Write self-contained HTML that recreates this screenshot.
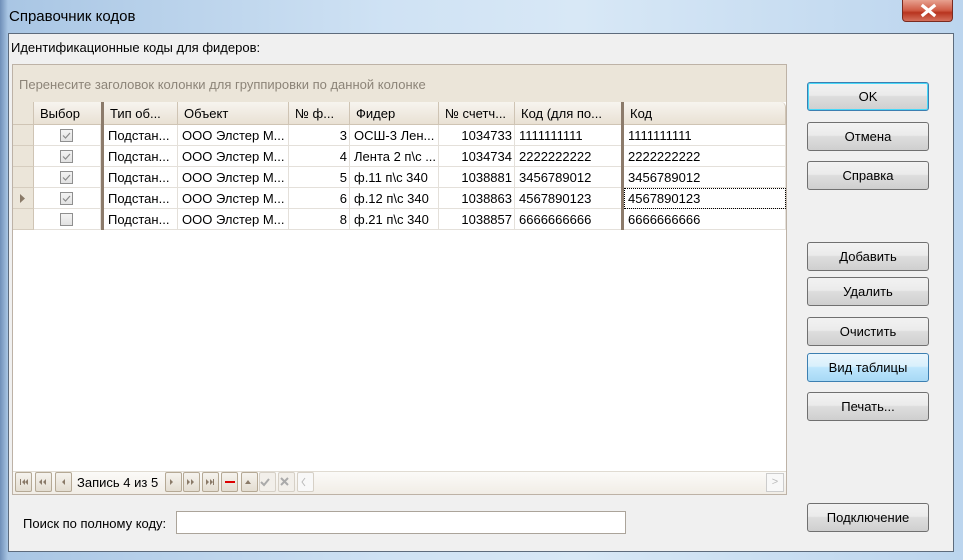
<!DOCTYPE html>
<html><head><meta charset="utf-8"><style>
*{box-sizing:border-box;margin:0;padding:0}
body{width:963px;height:560px;overflow:hidden;position:relative;font-family:"Liberation Sans","DejaVu Sans",sans-serif;font-size:13px;color:#000;background:linear-gradient(90deg,#6f8fb8 0,#a9c6e4 8px,#cfe2f4 40%,#d8e8f6 60%,#bcd5ee 100%)}
.a{position:absolute}
.title{left:9px;top:8px;font-size:15px;color:#000}
.client{left:8px;top:33px;width:946px;height:519px;background:#f0f0f0;border:1px solid #5d6b7c}
.btn{position:absolute;left:807px;width:122px;height:29px;border:1px solid #707070;border-radius:3px;background:linear-gradient(#f2f2f2 0,#ebebeb 45%,#dddddd 50%,#cfcfcf 100%);text-align:center;line-height:27px;font-size:13px}
.btn.blue{border-color:#3c7fb1;background:linear-gradient(#eaf6fd 0,#d9f0fc 45%,#bee6fd 50%,#a7d9f5 100%)}
.btn.ok{border-color:#3c7fb1;box-shadow:inset 0 0 0 1px #48d8f8}
.grid{left:12px;top:64px;width:775px;height:431px;border:1px solid #bdb2a6;background:#fff}
.grp{left:0;top:0;width:773px;height:37px;background:#ebe5d9;color:#8c8478;font-size:13px;padding:12px 0 0 6px}
.hdr{top:37px;height:23px;background:linear-gradient(#f7f4ef,#e9e1d4);border-bottom:1px solid #cfc4b4;border-right:1px solid #cfc4b4;padding:4px 0 0 6px;font-size:13px}
.cell{height:21px;border-right:1px solid #e4e0da;border-bottom:1px solid #e4e0da;padding:3px 0 0 4px;white-space:nowrap;overflow:hidden;font-size:13px}
.ind{background:#ebe5d9;border-right:1px solid #cfc4b4;border-bottom:1px solid #d6cdbf}
.chk{position:absolute;left:26px;top:4px;width:13px;height:13px;border:1px solid #8f8f8f;background:linear-gradient(#f3f3f3,#e2e2e2)}
.nb{position:absolute;top:472px;width:17px;height:20px;border:1px solid #b5a995;border-radius:2px;background:linear-gradient(#f6f3ee,#e4ddd1)}
</style></head><body>
<div class="a title">Справочник кодов</div>
<div class="a" style="left:902px;top:0;width:51px;height:22px;border:1px solid #7a2b20;border-top:none;border-radius:0 0 4px 4px;background:linear-gradient(#e7a190,#cf5a44 50%,#b8341f 60%,#d4705c)"><svg width="51" height="22" style="position:absolute;left:0;top:0"><path d="M20 6 L31 15 M31 6 L20 15" stroke="#fff" stroke-width="3.2" stroke-linecap="square"/></svg></div>
<div class="a client"></div>
<div class="a" style="left:11px;top:40px;font-size:13px">Идентификационные коды для фидеров:</div>
<div class="a grid">
 <div class="a grp">Перенесите заголовок колонки для группировки по данной колонке</div>
 <div class="a hdr" style="left:0;width:21px;background:#ebe5d9"></div>
 <div class="a hdr" style="left:21px;width:68px">Выбор</div>
 <div class="a hdr" style="left:91px;width:74px">Тип об...</div>
 <div class="a hdr" style="left:165px;width:111px">Объект</div>
 <div class="a hdr" style="left:276px;width:61px">№ ф...</div>
 <div class="a hdr" style="left:337px;width:89px">Фидер</div>
 <div class="a hdr" style="left:426px;width:76px">№ счетч...</div>
 <div class="a hdr" style="left:502px;width:107px">Код (для по...</div>
 <div class="a hdr" style="left:611px;width:162px;border-radius:0 5px 0 0">Код</div>
 <div id="rows"></div>
 <div class="a" style="left:88px;top:37px;width:3px;height:128px;background:#8c7b6b"></div>
 <div class="a" style="left:608px;top:37px;width:3px;height:128px;background:#8c7b6b"></div>
 <div class="a" style="left:0;top:406px;width:773px;height:23px;background:linear-gradient(#fbfaf8,#f1ede6);border-top:1px solid #e0dbd2"></div>
 <div class="a" style="left:64px;top:410px;font-size:13px">Запись 4 из 5</div>
 <div class="a" style="left:753px;top:408px;width:18px;height:19px;border:1px solid #ccc;color:#bbb;font-size:11px;text-align:center;line-height:17px;background:#f8f8f8">&gt;</div>
</div>
<div class="nb" style="left:15px"></div><div class="nb" style="left:35px"></div><div class="nb" style="left:55px"></div>
<div class="nb" style="left:165px"></div><div class="nb" style="left:183px"></div><div class="nb" style="left:202px"></div><div class="nb" style="left:221px"></div><div class="nb" style="left:241px"></div>
<div class="nb" style="left:259px;border-color:#d6d0c6;background:#f2efea"></div><div class="nb" style="left:278px;border-color:#d6d0c6;background:#f2efea"></div><div class="nb" style="left:297px;border-color:#d6d0c6;background:#f8f8f8"></div>
<svg class="a" style="left:15px;top:472px" width="300" height="20">
<g fill="#8a7a68">
<path d="M5 7v6h1V7z M10 7l-3 3 3 3z M13 7l-3 3 3 3z"/>
<path d="M27 7l-3 3 3 3z M31 7l-3 3 3 3z"/>
<path d="M50 7l-3 3 3 3z"/>
<path d="M155 7l3 3-3 3z"/>
<path d="M172 7l3 3-3 3z M176 7l3 3-3 3z"/>
<path d="M191 7l3 3-3 3z M195 7l3 3-3 3z M198 7v6h1V7z"/>
<path d="M230 12l3-4 3 4z"/>
</g>
<rect x="210" y="9" width="10" height="2" fill="#d00"/>
<path d="M246 10l3 3 5-6" stroke="#aaa" stroke-width="2" fill="none"/>
<path d="M266 6l7 7M273 6l-7 7" stroke="#aaa" stroke-width="2"/>
<path d="M290 6l-3 4 3 4" stroke="#bbb" fill="none"/>
</svg>
<div class="a" style="left:23px;top:516px;font-size:13px">Поиск по полному коду:</div>
<div class="a" style="left:176px;top:511px;width:450px;height:23px;background:#fff;border:1px solid #aba49a"></div>
<div class="btn ok" style="top:82px">OK</div>
<div class="btn" style="top:122px">Отмена</div>
<div class="btn" style="top:161px">Справка</div>
<div class="btn" style="top:242px">Добавить</div>
<div class="btn" style="top:277px">Удалить</div>
<div class="btn" style="top:317px">Очистить</div>
<div class="btn blue" style="top:353px">Вид таблицы</div>
<div class="btn" style="top:392px">Печать...</div>
<div class="btn" style="top:503px">Подключение</div>
<script>
var d=[["Подстан...","ООО Элстер М...","3","ОСШ-3 Лен...","1034733","1111111111",1],
["Подстан...","ООО Элстер М...","4","Лента 2 п\\с ...","1034734","2222222222",1],
["Подстан...","ООО Элстер М...","5","ф.11 п\\с 340","1038881","3456789012",1],
["Подстан...","ООО Элстер М...","6","ф.12 п\\с 340","1038863","4567890123",1],
["Подстан...","ООО Элстер М...","8","ф.21 п\\с 340","1038857","6666666666",0]];
var cols=[[91,74],[165,111],[276,61],[337,89],[426,76],[502,107],[611,162]];
var h="";
d.forEach(function(r,i){var t=60+i*21;
h+='<div class="a cell ind" style="left:0;top:'+t+'px;width:21px">'+(i==3?'<svg width="8" height="10" style="position:absolute;left:6px;top:6px"><path d="M1 0l5 4.5-5 4.5z" fill="#8a7a68"/></svg>':'')+'</div>';
h+='<div class="a cell" style="left:21px;top:'+t+'px;width:67px">'+'<span class="chk">'+(r[6]?'<svg width="11" height="11" style="position:absolute;left:0;top:0"><path d="M2 5.5l2.5 2.5 4.5-5" stroke="#8a8a8a" fill="none" stroke-width="1.2"/></svg>':'')+'</span></div>';
var v=[r[0],r[1],r[2],r[3],r[4],r[5],r[5]];
cols.forEach(function(c,j){var al=(j==2||j==4)?'text-align:right;padding-right:2px;':'';
var ex=(j==6&&i==3)?'outline:1px dotted #000;outline-offset:-1px;':'';
h+='<div class="a cell" style="left:'+c[0]+'px;top:'+t+'px;width:'+c[1]+'px;'+al+ex+'">'+v[j]+'</div>';});
});
document.getElementById("rows").innerHTML=h;
</script>
</body></html>
